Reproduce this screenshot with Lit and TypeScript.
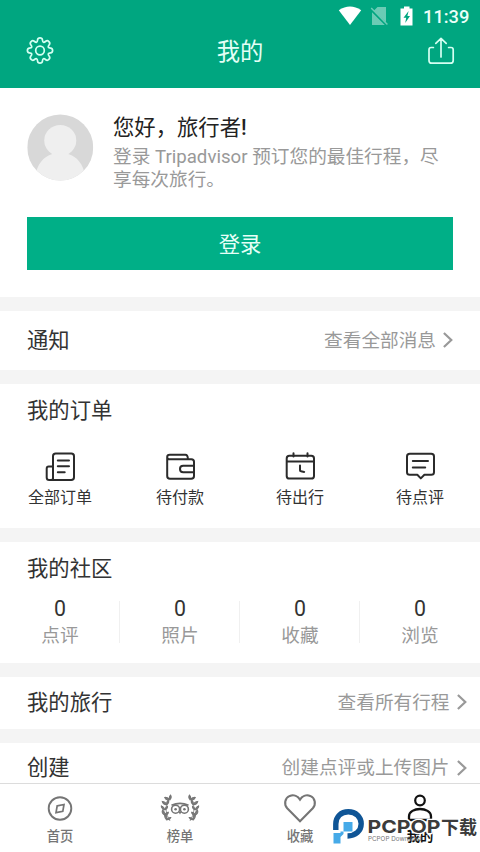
import { LitElement, html, css, svg } from "lit";
import { customElement } from "lit/decorators.js";

function gearPath(cx: number, cy: number, teeth: number, outer: number, inner: number): string {
  const pts: [number, number][] = [];
  for (let i = 0; i < teeth; i++) {
    const base = (i * 360) / teeth - 90;
    for (const [r, off] of [[inner, -17], [outer, -10], [outer, 10], [inner, 17]]) {
      const a = ((base + off) * Math.PI) / 180;
      pts.push([cx + r * Math.cos(a), cy + r * Math.sin(a)]);
    }
  }
  const mid = (a: [number, number], b: [number, number]) =>
    `${((a[0] + b[0]) / 2).toFixed(2)} ${((a[1] + b[1]) / 2).toFixed(2)}`;
  let d = `M${mid(pts[pts.length - 1], pts[0])}`;
  pts.forEach((p, i) => {
    d += `Q${p[0].toFixed(2)} ${p[1].toFixed(2)} ${mid(p, pts[(i + 1) % pts.length])}`;
  });
  return d + "Z";
}

const gear = html`<svg width="28" height="28" viewBox="0 0 28 28" fill="none" stroke="#d5fff2" stroke-width="1.7">
  <path d=${gearPath(14, 13.5, 8, 12.8, 9)} /><circle cx="14" cy="13.5" r="4.300" /></svg>`;

const share = html`<svg width="28" height="28" viewBox="0 0 28 28" fill="none" stroke="#d5fff2" stroke-width="1.7" stroke-linecap="round" stroke-linejoin="round">
  <path d="M6.4 10.5H4.2Q2 10.5 2 12.7V23.4Q2 26.2 4.8 26.2H23.4Q26.2 26.2 26.2 23.4V12.7Q26.2 10.5 24 10.5H21.6M14 20V1.6M8.8 6.4 14 1.4 19.2 6.4" /></svg>`;

const wifi = html`<svg width="24" height="20" viewBox="0 0 24 20"><path d="M.8 4.2Q12-3.3 23.2 4.2L12 19Z" fill="#fff" /></svg>`;
const sim = html`<svg width="19" height="20" viewBox="0 0 19 20" opacity=".42"><path d="M7.5 1H16V16.2L3.8 4.7Z M2 6.2 14.8 19H2Z" fill="#fff" /><path d="M1.2 2 17.4 18.6" stroke="#fff" stroke-width="1.5" /></svg>`;
const battery = html`<svg width="14" height="20" viewBox="0 0 14 20"><path d="M4 .5H9.500V2.500H12.500V19.500H.5V2.500H4Z" fill="#fff" /><path d="M8.600 5 3.500 11.700H6.200L5.200 17 10 10H7.400Z" fill="#00a680" /></svg>`;

const chevron = html`<svg class="chev" width="10" height="16" viewBox="0 0 10 16" fill="none" stroke="#999" stroke-width="2.2"><path d="M.9 1 8.300 8 .9 15" /></svg>`;

const orderIcons = [
  { label: "全部订单", art: svg`<path d="M8 26.400V4.200Q8 1.500 10.700 1.500H26.300Q29 1.500 29 4.200V25.200Q29 28 26.200 28H4.200Q1.700 28 1.700 25.500V16.500Q1.700 14.500 3.700 14.500H7.800" /><path d="M8 26.400Q7.800 28 6.200 28M12.800 8.500H24M12.800 14.200H24M12.800 20.300H19.700" />` },
  { label: "待付款", art: svg`<path d="M2.200 4.800V24Q2.200 26.800 5 26.800H26.200Q29 26.800 29 24V9.800Q29 7.200 26.400 7.200H4.300Q2.200 7.200 2.200 5Q2.200 2.800 4.800 2.800H20.300Q22.800 2.800 22.900 7M29 13.800H18.200Q15 13.800 15 17Q15 20.200 18.200 20.200H29" />` },
  { label: "待出行", art: svg`<rect x="1.700" y="3.700" width="27.300" height="22.900" rx="2.700" /><path d="M2 9.500H29M8.500 1.200V4.500M22.500 1.200V4.500M15 13.500V18.300Q15 19.300 16 19.300L19.200 19.900" />` },
  { label: "待点评", art: svg`<path d="M4.800 1.700H26.200Q29 1.700 29 4.400V20.200Q29 22.800 26.200 22.800H19.400L15.800 26.400L12.300 22.800H4.800Q2 22.800 2 20.200V4.400Q2 1.700 4.800 1.700ZM7.800 9H23M7.800 15.400H20.200" />` },
];

const stats = ["点评", "照片", "收藏", "浏览"];

const leaves = [[7.500, 3.500, -25], [5, 8, -15], [3.800, 13, 0], [4.500, 18, 18], [7, 22.500, 30]];
const laurel = (flip: boolean) => svg`<g transform=${flip ? "translate(40 0) scale(-1 1)" : ""}>
  <path d="M10.500 1.500Q1.500 14 10 27" fill="none" stroke="#858585" stroke-width=".8" />
  ${leaves.map(([x, y, r]) => svg`<g transform="translate(${x} ${y}) rotate(${r})" fill="#7c7c7c"><path d="M1 3Q-2.800 2-2.500-1.300Q.6-.2 1 3Z" /><path d="M1.300 3Q1 .3 3.800-1Q4.300 1.800 1.300 3Z" /></g>`)}</g>`;

const tabs = [
  { label: "首页", cls: "tab", art: svg`<circle cx="20" cy="14.500" r="11.300" stroke-width="1.900" /><path d="M17.200 11.800 24 10.500 22.800 17.400 16 18.700Z" stroke-width="1.700" />` },
  { label: "榜单", cls: "tab", art: svg`${laurel(false)}${laurel(true)}<path d="M11.500 11.300Q20 7.300 28.500 11.300" stroke-width="1.800" /><circle cx="15.600" cy="15.200" r="4" stroke-width="1.600" /><circle cx="24.400" cy="15.200" r="4" stroke-width="1.600" /><circle cx="15.600" cy="15.200" r="1.300" fill="#757575" stroke="none" /><circle cx="24.400" cy="15.200" r="1.300" fill="#757575" stroke="none" /><path d="M18.300 17.500 20 20.500 21.700 17.500Z" fill="#757575" stroke="none" />` },
  { label: "收藏", cls: "tab", art: svg`<path d="M20 27.300 7.200 14.300C3.800 10.500 4.600 4 9.800 1.900C14 .4 18 2.400 20 5.600C22 2.400 26 .4 30.200 1.900C35.400 4 36.200 10.500 32.800 14.300Z" stroke-width="2.100" />` },
  { label: "我的", cls: "tab on", art: svg`<circle cx="20" cy="6.500" r="4.800" stroke-width="2.200" /><path d="M9 26V22.500C9 17.500 14.500 15 20 15S31 17.500 31 22.500V26Z" stroke-width="2.300" />` },
];

@customElement("app-root")
export class AppRoot extends LitElement {
  static styles = css`
    :host { display: block; position: relative; width: 480px; height: 852px; overflow: hidden; background: #fff; color: #333; font-family: Roboto, "Noto Sans CJK SC", sans-serif; }
    * { box-sizing: border-box; }
    svg { display: block; flex: none; overflow: visible; }
    .page { display: flex; flex-direction: column; height: 852px; }
    .head { height: 88px; flex: none; background: #00a680; color: #e4fff6; }
    .status { display: flex; height: 32px; justify-content: flex-end; align-items: center; padding-right: 11px; color: #ebfff8; }
    .status .sim { margin-left: 8px; }
    .status .bat { margin-left: 11px; }
    .time { width: 46px; margin-left: 9px; margin-top: 2px; font-size: 18.300px; font-weight: 500; line-height: 20px; white-space: nowrap; }
    .bar { display: flex; justify-content: space-between; align-items: center; height: 38px; padding: 0 25.500px; }
    .title { font-size: 23.300px; line-height: 38px; padding-top: 2px; }
    .hello { display: flex; height: 129px; flex: none; padding: 26px 27px 0 26.500px; gap: 20px; }
    .words { flex: 1; white-space: nowrap; }
    .hi { font-size: 21.330px; line-height: 28px; color: #222; }
    .hi b { font-weight: 500; }
    .desc { font-size: 18.670px; line-height: 23px; margin-top: 3.500px; color: #999; }
    .login { height: 53px; flex: none; margin: 0 27px 26.500px; background: #00af87; color: #e6fff7; font-size: 21.330px; line-height: 55px; text-align: center; }
    .gap { height: 14px; flex: none; background: #f4f4f4; }
    .row { display: flex; flex: none; align-items: center; justify-content: space-between; padding: 0 27px 4px; font-size: 21.330px; }
    .more { display: flex; align-items: center; font-size: 18.670px; color: #999; gap: 7px; }
    .chev { margin-top: 3px; }
    .notice { height: 59.500px; }
    .trip { height: 51.500px; padding-right: 13.500px; padding-bottom: 4px; }
    .make { height: 40px; align-items: flex-start; padding: 9.500px 13.500px 0 27px; line-height: 32px; }
    .make .chev { margin-top: 0; }
    .cap { font-size: 21.330px; line-height: 53px; height: 50px; padding-left: 27px; }
    .orders { height: 144px; flex: none; }
    .grid { display: grid; grid-template-columns: repeat(4, 1fr); }
    .order { display: flex; flex-direction: column; align-items: center; padding-top: 17.500px; font-size: 16px; line-height: 24px; }
    .order svg { margin-bottom: 5px; }
    .social { height: 121px; flex: none; }
    .stat { text-align: center; height: 71px; padding-top: 4px; background: linear-gradient(#f0f0f0, #f0f0f0) right 9px / 1px 42px no-repeat; }
    .stat:last-child { background: none; }
    .num { font-size: 21.300px; line-height: 26px; }
    .kind { font-size: 18.670px; line-height: 29px; color: #999; }
    .tabs { flex: none; height: 70px; border-top: 1.500px solid #dcdcdc; background: #fff; }
    .tab { display: flex; flex-direction: column; align-items: center; padding-top: 10px; color: #757575; font-size: 13.300px; font-weight: 500; line-height: 20px; }
    .tab svg { margin-bottom: 5px; }
    .on { color: #111; font-weight: 700; }
    .mark { position: absolute; left: 330px; top: 804px; }
    .brand { font-family: Inter, "Noto Sans CJK SC", sans-serif; font-weight: 700; }
    .sub { font-family: Inter, sans-serif; }
  `;

  render() {
    return html`<div class="page">
      <div class="head">
        <div class="status">${wifi}<div class="sim">${sim}</div><div class="bat">${battery}</div><div class="time">11:39</div></div>
        <div class="bar">${gear}<div class="title">我的</div>${share}</div>
      </div>
      <div class="hello">
        <svg width="66.500" height="67" viewBox="0 0 66 67"><defs><clipPath id="face"><circle cx="33" cy="33.500" r="33" /></clipPath></defs>
          <g clip-path="url(#face)"><rect width="66" height="67" fill="#d8d8d8" /><ellipse cx="33" cy="26.500" rx="16" ry="15.500" fill="#efefef" /><path d="M25 37H41V40C50 43 56 50 58 62V67H8V62C10 50 16 43 25 40Z" fill="#efefef" /></g></svg>
        <div class="words"><div class="hi">您好，旅行者<b>!</b></div>
          <div class="desc">登录 Tripadvisor 预订您的最佳行程，尽<br />享每次旅行。</div></div>
      </div>
      <div class="login">登录</div>
      <div class="gap"></div>
      <div class="row notice"><span>通知</span><span class="more">查看全部消息${chevron}</span></div>
      <div class="gap"></div>
      <div class="orders"><div class="cap">我的订单</div>
        <div class="grid">${orderIcons.map((o) => html`<div class="order"><svg width="31" height="29" viewBox="0 0 31 29" fill="none" stroke="#2b2b2b" stroke-width="2" stroke-linecap="round" stroke-linejoin="round">${o.art}</svg>${o.label}</div>`)}</div>
      </div>
      <div class="gap"></div>
      <div class="social"><div class="cap">我的社区</div>
        <div class="grid">${stats.map((s) => html`<div class="stat"><div class="num">0</div><div class="kind">${s}</div></div>`)}</div>
      </div>
      <div class="gap"></div>
      <div class="row trip"><span>我的旅行</span><span class="more">查看所有行程${chevron}</span></div>
      <div class="gap"></div>
      <div class="row make"><span>创建</span><span class="more">创建点评或上传图片${chevron}</span></div>
      <div class="tabs grid">${tabs.map((t) => html`<div class=${t.cls}><svg width="40" height="28" viewBox="0 0 40 28" fill="none" stroke="currentColor">${t.art}</svg>${t.label}</div>`)}</div>
    </div>
    <svg class="mark" width="150" height="44" viewBox="0 0 150 44">
      <path d="M5.800 26V20C5.800 12.500 11 7.800 18.300 7.800C25.800 7.800 31.200 13 31.200 19.800C31.200 27 25.500 32 17.500 32" fill="none" stroke="#0f5596" stroke-width="5.400" />
      <path d="M13.500 18H22.500V27.500H13.500Z" fill="#46aae8" />
      <path d="M3.500 29H10.500V27.500H13.500V30L10.500 33V39.500H3.500Z" fill="#46aae8" />
      <g fill="#3b3b3b" stroke="#fff" stroke-width="2.500" paint-order="stroke" stroke-linejoin="round">
        <text class="brand" x="37.500" y="29" font-size="18" textLength="73" lengthAdjust="spacingAndGlyphs">PCPOP</text>
        <text class="brand" x="111" y="29.500" font-size="18" textLength="36" lengthAdjust="spacingAndGlyphs">下载</text>
      </g>
      <text class="sub" x="38" y="36.500" font-size="6.500" fill="#777" textLength="53" lengthAdjust="spacingAndGlyphs">PCPOP Download</text>
    </svg>`;
  }
}
